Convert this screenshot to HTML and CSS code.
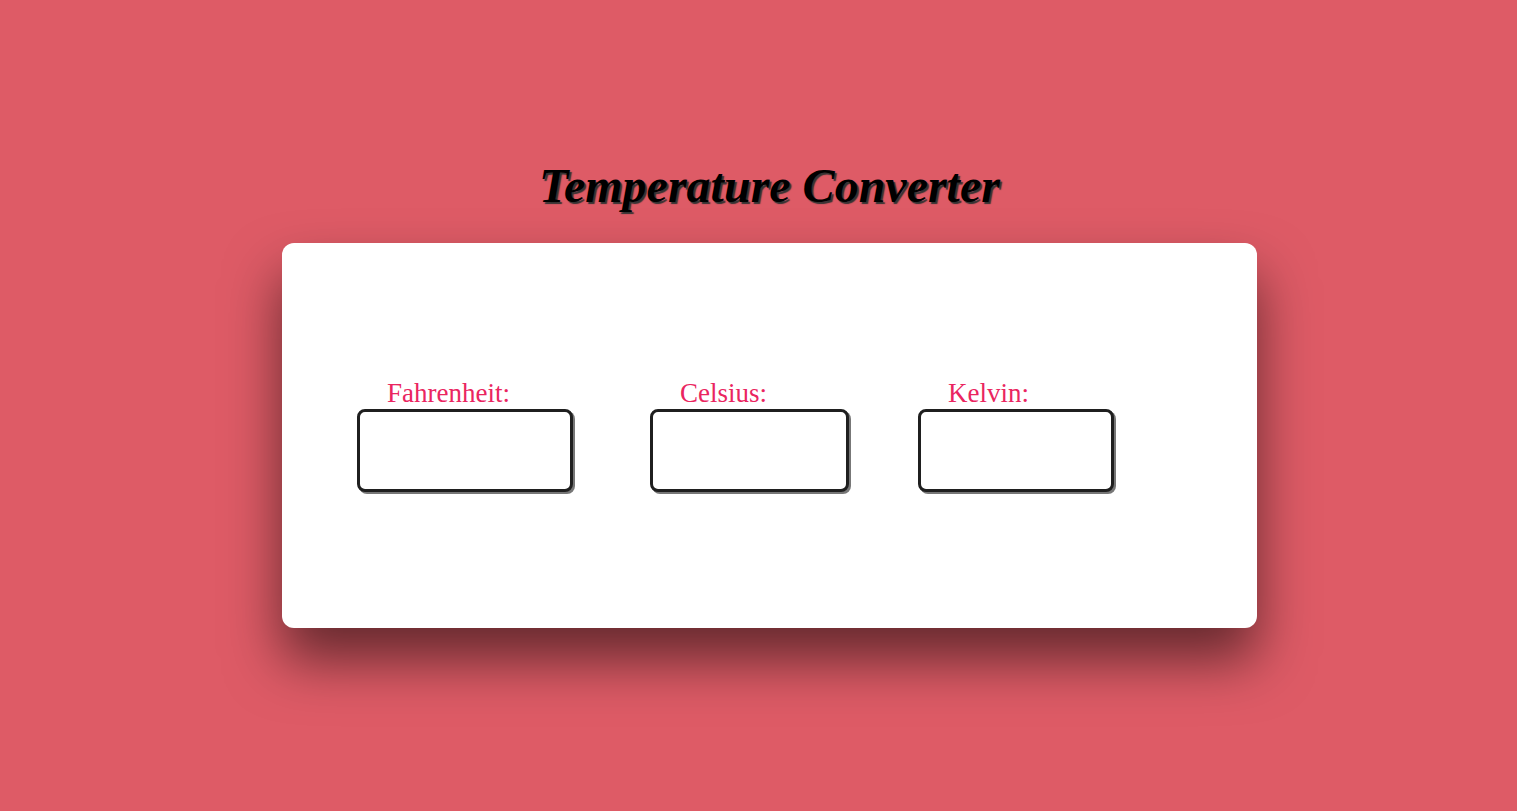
FILE: index.html
```html
<!DOCTYPE html>
<html lang="en">
<head>
  <meta charset="UTF-8">
  <title>Temperature Converter</title>
  <link rel="stylesheet" href="styles.css">
</head>
<body>
  <div class="page">
    <h1>Temperature Converter</h1>
    <div class="card">
      <div class="field field-f">
        <label for="fahrenheit">Fahrenheit:</label>
        <input type="text" id="fahrenheit">
      </div>
      <div class="field field-c">
        <label for="celsius">Celsius:</label>
        <input type="text" id="celsius">
      </div>
      <div class="field field-k">
        <label for="kelvin">Kelvin:</label>
        <input type="text" id="kelvin">
      </div>
    </div>
  </div>
</body>
</html>
```

FILE: styles.css
```css
html {
  height: 100%;
}
body {
  margin: 8px;
  min-height: calc(100% - 16px);
  background: #de5b66;
  font-family: "Liberation Serif", "Times New Roman", serif;
}
.page {
  padding-left: 22px;
  padding-top: 150px;
  padding-bottom: 100px;
}
h1 {
  margin: 0 0 30px;
  font-size: 48px;
  font-style: italic;
  font-weight: bold;
  text-align: center;
  color: #000;
  text-shadow: 2px 2px 1px #333;
}
.card {
  width: 975px;
  height: 385px;
  box-sizing: border-box;
  margin: 0 auto;
  padding: 135px 0 0 75px;
  background: #fff;
  border-radius: 12px;
  box-shadow: 0 32px 55px rgba(0, 0, 0, 0.55);
  display: flex;
}
.field {
  display: flex;
  flex-direction: column;
}
.field label {
  padding-left: 30px;
  font-size: 27px;
  line-height: 31px;
  color: #ea2560;
}
.field input {
  box-sizing: border-box;
  height: 83px;
  border: 3px solid #1f1f1f;
  border-radius: 8px;
  box-shadow: 2px 2px 0 #777;
  background: #fff;
  outline: none;
}
.field-f input { width: 216px; }
.field-c input { width: 199px; }
.field-k input { width: 196px; }
.field-f { margin-right: 77px; }
.field-c { margin-right: 69px; }
```
